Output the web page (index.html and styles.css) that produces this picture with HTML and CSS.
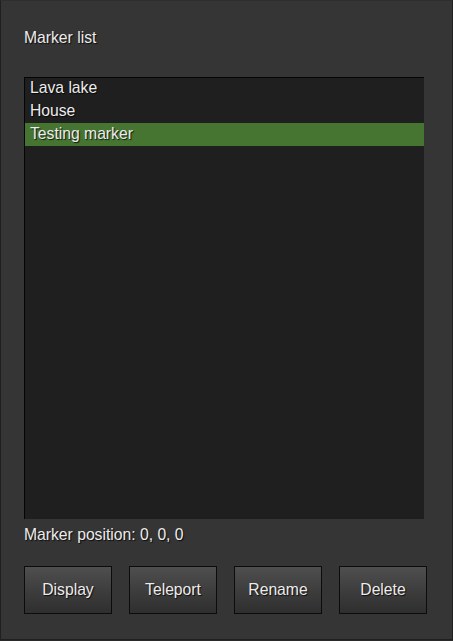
FILE: index.html
```html
<!DOCTYPE html>
<html>
<head>
<meta charset="utf-8">
<link rel="stylesheet" href="styles.css">
</head>
<body>
<div class="window">
  <div class="title">Marker list</div>
  <div class="list">
    <div class="item">Lava lake</div>
    <div class="item">House</div>
    <div class="item selected">Testing marker</div>
  </div>
  <div class="position">Marker position: 0, 0, 0</div>
  <div class="buttons">
    <button class="btn">Display</button>
    <button class="btn">Teleport</button>
    <button class="btn">Rename</button>
    <button class="btn">Delete</button>
  </div>
</div>
</body>
</html>
```
FILE: styles.css
```css
html, body {
  margin: 0;
  padding: 0;
  background: #2a2a2a;
}
body {
  font-family: "Liberation Sans", Arial, sans-serif;
  font-size: 15.7px;
  color: #ececec;
}
.window {
  box-sizing: border-box;
  width: 453px;
  height: 640px;
  background: #353535;
  border: 1px solid #202020;
  border-top-color: #2e2e2e;
  padding: 28px 23px 0 23px;
  display: flex;
  flex-direction: column;
}
.title, .position, .item, .btn {
  text-shadow: 1px 1px 1px rgba(0,0,0,0.8);
}
.title {
  line-height: 18px;
  height: 18px;
}
.list {
  margin-top: 30px;
  width: 400px;
  height: 442px;
  box-sizing: border-box;
  background: #1f1f1f;
  box-shadow: inset 1px 1px 0 #050505;
  display: flex;
  flex-direction: column;
}
.item {
  height: 23px;
  line-height: 21px;
  padding-left: 6px;
}
.item.selected {
  background: #467431;
  margin-left: 1px;
  padding-left: 5px;
}
.position {
  margin-top: 7px;
  line-height: 18px;
  height: 18px;
}
.buttons {
  margin-top: 22px;
  display: flex;
  gap: 17px;
}
.btn {
  width: 88px;
  height: 48px;
  box-sizing: border-box;
  border: 1px solid #0c0c0c;
  border-radius: 0;
  background: linear-gradient(to bottom, #4f4f4f 0%, #3c3c3c 55%, #2f2f2f 100%);
  color: #ececec;
  font-family: "Liberation Sans", Arial, sans-serif;
  font-size: 15.7px;
  padding: 0;
}
```
